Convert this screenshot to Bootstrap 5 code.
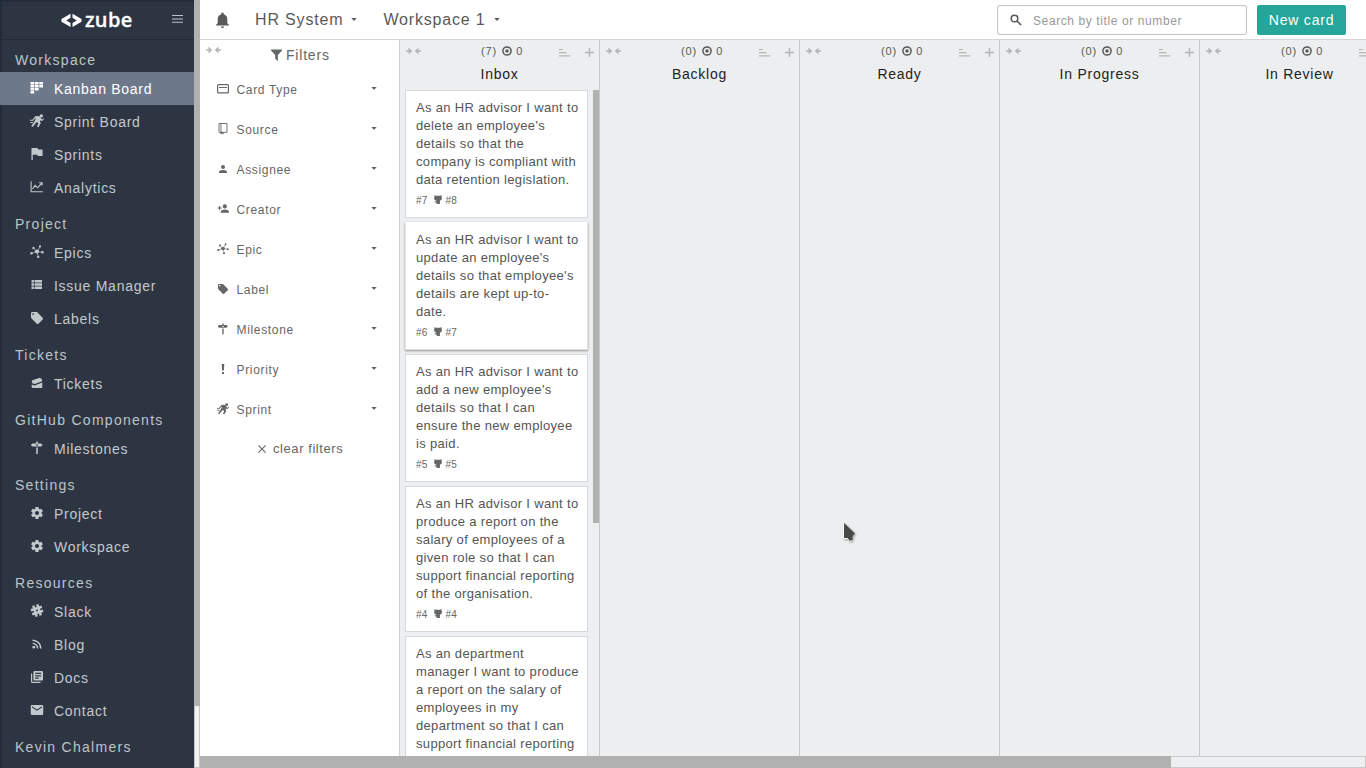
<!DOCTYPE html>
<html lang="en">
<head>
<meta charset="utf-8">
<meta name="viewport" content="width=device-width, initial-scale=1">
<title>Zube - Kanban Board</title>
<link href="https://cdn.jsdelivr.net/npm/bootstrap@5.3.0/dist/css/bootstrap.min.css" rel="stylesheet">
<style>
body{font-family:"Liberation Sans",Arial,sans-serif;font-size:14px;color:#5a5a5a;letter-spacing:.8px;line-height:18px;background:#fff}
svg{display:block;flex:none;fill:currentColor}
.side{width:194px;background:#2d3543;color:#bcc4c8;box-shadow:inset 2px 2px 3px -1px #1d2635}
.side-top{height:40px;border-bottom:1px solid #212a38;padding-left:61px}
.logo-mark{color:#fff;margin-top:2px}
.logo-word{font:600 20px/22px "Open Sans","Noto Sans",sans-serif;letter-spacing:.3px;color:#fff;margin-left:3px;-webkit-text-stroke:.3px #fff}
.side-head{height:32px;padding:11px 0 0 15px;letter-spacing:1.28px}
.side-link{height:33px;padding-left:30px;color:#c2c9cd;text-decoration:none;gap:10px;letter-spacing:.73px}
.side-link svg{margin-top:-1px}
.side-link span{padding-top:1px}
.side-link.active{background:#6e788b;color:#fff}
.side-track{width:6px;background:#f3f3f3;border:1px solid #c4c4c4}
.side-thumb{height:706px;background:#b1b1b1;margin:-1px}
.topbar{height:40px;border-bottom:1px solid #d4d4d4;font-size:16px;letter-spacing:.83px}
.search-box{width:250px;height:30px;border:1px solid #c8c8c8;border-radius:2px;box-shadow:inset 0 0 1px #bbb;padding-left:12px}
.search-box input{border:0;outline:0;background:none;font-size:12px;letter-spacing:.6px;padding:2px 0 0;margin-left:11px;width:180px}
.search-box input::placeholder{color:#999;opacity:1}
.btn-new{background:#26a69a;color:#fff;width:89px;height:30px;font-size:14px;border:0;border-radius:2px;padding:1px 0 0;letter-spacing:.8px}
.pane{width:200px;border-right:1px solid #d0d0d0}
.lane{width:200px;background:#edeef0;border-right:1px solid #c9c9c9}
.pale{color:#b5b5b5}
.filter-title{height:30px;color:#666}
.filter-row{height:40px;font-size:12px;letter-spacing:.66px;padding:0 22px 0 17px;color:#666}
.filter-row>svg{margin-top:-3px}
.filter-row>span{margin-left:7.5px}
.lane-head{height:22px;font-size:11px;padding:0 5px 0 6px}
.lane-title{height:28px;padding-top:3px;color:#222;letter-spacing:.75px}
.lane-num{margin-left:60px}
.lane-dot{margin:0 4.5px 0 5px}
.lane-sort{margin-top:4px}
.lane-plus{margin:3px 0 0 15px}
.story{width:183px;background:#fff;border:1px solid #d5d9dd;padding:8px 7px 8px 10px;margin:0 0 4px 5px;font-size:13px;letter-spacing:.33px;color:#555}
.story.raised{border-color:#fff #e2e2e2 #ddd;box-shadow:0 1px 2px rgba(0,0,0,.38)}
.story-meta{height:20px;padding-top:3px;font-size:10px;letter-spacing:.2px;color:#666}
.story-cat{margin:3px 4px 0 6px}
.lane-thumb{width:6px;height:433px;background:#b1b1b1}
.board-track{height:12px;border:1px solid #c9c9c9;background:#edeef0}
.board-thumb{width:971px;height:12px;margin:-1px;background:#b1b1b1}
.pointer{left:840px;top:519px;filter:drop-shadow(1px 1px 1px #999)}
</style>
</head>
<body class="vh-100 overflow-hidden d-flex">
<svg width="0" height="0" class="position-absolute" aria-hidden="true">
<symbol id="kanban" viewBox="0 0 13 12"><path d="M0 0h3.7v2.4H0zM4.4 0h3.7v2.4H4.4zM8.8 0h3.7v2.4H8.8zM0 3h3.7v2.4H0zM4.4 3h3.7v2.4H4.4zM8.8 3h3.7v2.4H8.8zM0 6h3.7v2.4H0zM4.4 6h3.7v2.4H4.4zM0 9h3.7v2.4H0z"/></symbol>
<symbol id="runner" viewBox="0 0 14 14"><circle cx="11.300" cy="1.900" r="1.700"/><path d="M5.500 2 9.500 2.200l1.800 2.200-1.300 2.400.7 2.500-2.200 4-1.500-.7 1.400-3.300-1.700-1.200L4.900 10.300 2.600 13l-1.400-1L3.500 9l2.500-4.500-1.300.2-1.500 2-1-.8zM11 4.600l1.300.8 1.300-1.200.4.9-1.700 2L10 6.300zM0 5.700h3.300v1.100H0zM.4 7.900h2.600v1.100H.4z"/></symbol>
<symbol id="flag" viewBox="0 0 12 13"><path d="M0 0h6.700l.6 1.600H12v7.200H7L6.400 7.300H1.400V13H0z"/></symbol>
<symbol id="chart" viewBox="0 0 13 12"><path d="M.6.3v10.500h11.700M2 8l2.600-3.600 2.600 2.400 4-4.600M8.600 1.800h3v2.800" fill="none" stroke="currentColor" stroke-width="1.100"/></symbol>
<symbol id="epic" viewBox="0 0 14 14"><g stroke="currentColor" stroke-width=".7"><path d="M7 6.500 3.400 3M7 6.500 9.900 2M7 6.500l5.500.7M7 6.500l1.200 5M7 6.500 1.500 8.300"/></g><circle cx="7" cy="6.500" r="2.100"/><circle cx="3.500" cy="3" r="1.200"/><circle cx="10" cy="1.400" r="1.100"/><circle cx="12.500" cy="7.200" r="1.200"/><circle cx="8.200" cy="11.900" r="1.200"/><circle cx="1.500" cy="8.300" r="1.200"/></symbol>
<symbol id="list" viewBox="0 0 11 10"><path d="M0 0h2.400v2.500H0zM3.100 0h7.400v2.500H3.100zM0 3.200h2.400v2.500H0zM3.100 3.200h7.400v2.500H3.100zM0 6.400h2.400V9H0zM3.100 6.400h7.400V9H3.100z"/></symbol>
<symbol id="tag" viewBox="2 2 20 20"><path d="M5.500 7A1.500 1.500 0 1 1 7 5.500 1.500 1.500 0 0 1 5.500 7m15.910 4.580-9-9C12.050 2.220 11.550 2 11 2H4a2 2 0 0 0-2 2v7c0 .550.220 1.050.590 1.410l9 9c.360.360.860.590 1.410.590s1.050-.230 1.410-.590l7-7c.370-.360.590-.860.590-1.410s-.230-1.060-.590-1.420"/></symbol>
<symbol id="ticket" viewBox="0 0 12 12"><path d="M.8 4.300Q1 3.500 2 3.100L8.200.9q1.200-.3 1.600.7l.8.300q.8.900.4 2.300L4.600 6.700q-1.500.6-2.200-.2L1.200 6.200Q.6 5.200.8 4.300zM.9 7.500l1.700.7q.9.400 2.300-.1L11.300 5.600v4.600q0 .8-.8.800H2q-1.400 0-1.400-1.200z"/></symbol>
<symbol id="sign" viewBox="0 0 12 14"><path fill-rule="evenodd" d="M5.200.5h1.600v1.900H10l1.700 1.500L10 5.600H1.500L.3 4.800V3.200l1.200-.8h3.700zM5 3.600v.8h2v-.8zM5.200 6.400h1.600v6.600H5.200z"/></symbol>
<symbol id="cog" viewBox="2 2 20 20"><path d="M12 15.500A3.500 3.500 0 0 1 8.500 12 3.500 3.500 0 0 1 12 8.500a3.500 3.500 0 0 1 3.500 3.500 3.500 3.500 0 0 1-3.500 3.500m7.430-2.530c.040-.320.070-.640.070-.970s-.030-.660-.070-1l2.110-1.630c.190-.150.240-.420.120-.640l-2-3.460c-.120-.220-.390-.310-.610-.220l-2.490 1c-.520-.390-1.060-.730-1.690-.980l-.370-2.650A.506.506 0 0 0 14 2h-4c-.250 0-.460.180-.5.420l-.370 2.650c-.630.250-1.170.590-1.690.980l-2.490-1c-.220-.090-.490 0-.610.220l-2 3.460c-.130.220-.070.490.120.640L4.570 11c-.040.340-.070.670-.070 1s.030.650.070.970l-2.110 1.660c-.190.150-.250.420-.120.640l2 3.460c.120.220.390.300.610.220l2.490-1.010c.520.400 1.060.740 1.690.990l.370 2.650c.040.240.250.420.5.420h4c.250 0 .460-.180.500-.420l.370-2.650c.630-.260 1.170-.590 1.690-.990l2.490 1.010c.220.080.490 0 .610-.220l2-3.460c.120-.220.070-.490-.120-.640z"/></symbol>
<symbol id="slack" viewBox="0 0 14 14"><g transform="rotate(-18 7 6.500)"><path d="M4.900.8v11.400M9.100.8v11.400M1.300 4.400h11.400M1.300 8.600h11.400" fill="none" stroke="currentColor" stroke-width="2.500"/></g></symbol>
<symbol id="rss" viewBox="0 0 11 11"><circle cx="2" cy="9" r="1.500"/><path d="M.6 1.300A9.100 9.100 0 0 1 9.700 10.400M.6 4.800a5.600 5.600 0 0 1 5.600 5.600" fill="none" stroke="currentColor" stroke-width="1.600"/></symbol>
<symbol id="docs" viewBox="2 2 20 20"><path d="M4 6H2v14a2 2 0 0 0 2 2h14v-2H4zm16-4H8a2 2 0 0 0-2 2v12a2 2 0 0 0 2 2h12a2 2 0 0 0 2-2V4a2 2 0 0 0-2-2m-1 9H9V9h10zm-4 4H9v-2h6zm4-8H9V5h10z"/></symbol>
<symbol id="mail" viewBox="2 4 20 16"><path d="m20 8-8 5-8-5V6l8 5 8-5m0-2H4c-1.110 0-2 .890-2 2v12a2 2 0 0 0 2 2h16a2 2 0 0 0 2-2V6a2 2 0 0 0-2-2"/></symbol>
<symbol id="caret" viewBox="0 0 6 3"><path d="M.3 0h5.400L3 3z"/></symbol>
<symbol id="cardtype" viewBox="0 0 12 10"><path d="M.6 1.500Q.6.600 1.500.600h9q.9 0 .9.900v6.500q0 .9-.9.900h-9q-.9 0-.9-.9zM2 3.500h8" fill="none" stroke="currentColor" stroke-width="1.200"/></symbol>
<symbol id="repo" viewBox="0 0 9 12"><path d="M.5.5h8v8.800h-8zM2.500.5v8.800" fill="none" stroke="currentColor" stroke-width=".9"/><path d="M2 9h3v2.500l-1.500-1L2 11.500z"/></symbol>
<symbol id="person" viewBox="4 4 16 16"><path d="M12 4a4 4 0 1 1 0 8 4 4 0 0 1 0-8m0 10c4.420 0 8 1.790 8 4v2H4v-2c0-2.210 3.580-4 8-4"/></symbol>
<symbol id="personadd" viewBox="0 4 23 16"><path d="M15 14c-2.670 0-8 1.330-8 4v2h16v-2c0-2.670-5.330-4-8-4m-9-4V7H4v3H1v2h3v3h2v-3h3v-2m6 2a4 4 0 1 0 0-8 4 4 0 0 0 0 8"/></symbol>
<symbol id="bang" viewBox="0 0 3 10"><path d="M.2 0h2.600l-.4 6.500H.6zM.5 7.900h2V10h-2z"/></symbol>
<symbol id="inward" viewBox="0 0 15 8"><path d="M0 3.200h2.500V.6L6.200 4 2.500 7.400V4.800H0zM15 3.200h-2.500V.6L8.800 4l3.700 3.400V4.800H15z"/></symbol>
<symbol id="target" viewBox="0 0 10 10"><circle cx="5" cy="5" r="4.100" fill="none" stroke="currentColor" stroke-width="1.500"/><circle cx="5" cy="5" r="1.700"/></symbol>
<symbol id="sort" viewBox="0 0 11 8"><path d="M0 0h4v1H0zM0 3h7.500v1.200H0zM0 6.200h11v1.200H0z"/></symbol>
<symbol id="plus" viewBox="0 0 9 9"><path d="M3.800 0h1.400v3.800H9v1.400H5.200V9H3.800V5.200H0V3.800h3.800z"/></symbol>
<symbol id="cat" viewBox="0 0 8 9"><path d="M.5 0 2 .7h4L7.500 0v1.500L8 2.800 7.500 4.800l-1.600 1V9H2.700V7.600L1.200 7.400.3 6.300l1.200.1.900-.6L.6 4.800 0 2.800l.5-1.300z"/></symbol>
</svg>

<aside class="side d-flex flex-column flex-shrink-0">
  <div class="side-top d-flex align-items-center flex-shrink-0">
    <svg class="logo-mark" width="21" height="15" viewBox="0 0 21 15"><path d="M9.500.8v4L5.300 7.400l4.200 2.700v4L.5 8.800V6zM11.500.8v4l4.200 2.600-4.200 2.700v4l9-5.300V6z"/></svg>
    <span class="logo-word">zube</span>
    <svg style="margin:-2px 11px 0 auto" width="11" height="8" viewBox="0 0 11 8"><path d="M0 0h11v1H0zM0 3.400h11v1H0zM0 6.800h11v1H0z"/></svg>
  </div>
  <nav>
    <div class="side-head">Workspace</div>
    <a class="side-link active d-flex align-items-center"><svg width="14" height="12"><use href="#kanban"/></svg><span>Kanban Board</span></a>
    <a class="side-link d-flex align-items-center"><svg width="14" height="14"><use href="#runner"/></svg><span>Sprint Board</span></a>
    <a class="side-link d-flex align-items-center"><svg width="14" height="12"><use href="#flag"/></svg><span>Sprints</span></a>
    <a class="side-link d-flex align-items-center"><svg width="14" height="12"><use href="#chart"/></svg><span>Analytics</span></a>
    <div class="side-head">Project</div>
    <a class="side-link d-flex align-items-center"><svg width="14" height="14"><use href="#epic"/></svg><span>Epics</span></a>
    <a class="side-link d-flex align-items-center"><svg width="14" height="10"><use href="#list"/></svg><span>Issue Manager</span></a>
    <a class="side-link d-flex align-items-center"><svg width="14" height="12"><use href="#tag"/></svg><span>Labels</span></a>
    <div class="side-head">Tickets</div>
    <a class="side-link d-flex align-items-center"><svg width="14" height="12"><use href="#ticket"/></svg><span>Tickets</span></a>
    <div class="side-head">GitHub Components</div>
    <a class="side-link d-flex align-items-center"><svg width="14" height="14"><use href="#sign"/></svg><span>Milestones</span></a>
    <div class="side-head">Settings</div>
    <a class="side-link d-flex align-items-center"><svg width="14" height="12"><use href="#cog"/></svg><span>Project</span></a>
    <a class="side-link d-flex align-items-center"><svg width="14" height="12"><use href="#cog"/></svg><span>Workspace</span></a>
    <div class="side-head">Resources</div>
    <a class="side-link d-flex align-items-center"><svg width="14" height="14"><use href="#slack"/></svg><span>Slack</span></a>
    <a class="side-link d-flex align-items-center"><svg width="14" height="10"><use href="#rss"/></svg><span>Blog</span></a>
    <a class="side-link d-flex align-items-center"><svg width="14" height="12"><use href="#docs"/></svg><span>Docs</span></a>
    <a class="side-link d-flex align-items-center"><svg width="14" height="10"><use href="#mail"/></svg><span>Contact</span></a>
    <div class="side-head">Kevin Chalmers</div>
  </nav>
</aside>
<div class="side-track flex-shrink-0"><div class="side-thumb"></div></div>

<main class="d-flex flex-column flex-grow-1 overflow-hidden">
  <header class="topbar d-flex align-items-center flex-shrink-0">
    <svg style="margin-left:16px" width="13" height="16" viewBox="4 2 16 20"><path d="M12 22a2 2 0 0 0 2-2h-4a2 2 0 0 0 2 2m6-6v-5c0-3.070-1.640-5.640-4.500-6.320V4a1.500 1.500 0 0 0-3 0v.68C7.630 5.360 6 7.920 6 11v5l-2 2v1h16v-1z"/></svg>
    <span style="margin-left:26px">HR System</span><svg style="margin:-1px 0 0 8px" width="6" height="3"><use href="#caret"/></svg>
    <span style="margin-left:26px">Workspace 1</span><svg style="margin:-1px 0 0 8px" width="6" height="3"><use href="#caret"/></svg>
    <label class="search-box d-flex align-items-center ms-auto"><svg width="12" height="12" viewBox="0 0 12 12"><circle cx="4.500" cy="4.500" r="3.300" fill="none" stroke="currentColor" stroke-width="1.500"/><path d="m7 7 4 4" stroke="currentColor" stroke-width="1.700"/></svg><input placeholder="Search by title or number"></label>
    <button class="btn btn-new" style="margin:0 20px 0 10px">New card</button>
  </header>

  <div class="d-flex flex-grow-1 overflow-hidden">
    <section class="pane flex-shrink-0">
      <div class="filter-title d-flex align-items-center">
        <svg class="pale align-self-start" style="margin:6px 0 0 6px" width="15" height="8"><use href="#inward"/></svg>
        <svg style="margin-left:50px" width="11" height="12" viewBox="0 0 11 12"><path d="M0 .6h11v1L6.900 6v6L4.200 9.800V6L0 1.600z"/></svg><span style="margin-left:4px">Filters</span>
      </div>
      <div class="filter-row d-flex align-items-center"><svg width="12" height="10"><use href="#cardtype"/></svg><span>Card Type</span><svg class="ms-auto" width="6" height="3"><use href="#caret"/></svg></div>
      <div class="filter-row d-flex align-items-center"><svg width="12" height="12"><use href="#repo"/></svg><span>Source</span><svg class="ms-auto" width="6" height="3"><use href="#caret"/></svg></div>
      <div class="filter-row d-flex align-items-center"><svg width="12" height="8"><use href="#person"/></svg><span>Assignee</span><svg class="ms-auto" width="6" height="3"><use href="#caret"/></svg></div>
      <div class="filter-row d-flex align-items-center"><svg width="12" height="9"><use href="#personadd"/></svg><span>Creator</span><svg class="ms-auto" width="6" height="3"><use href="#caret"/></svg></div>
      <div class="filter-row d-flex align-items-center"><svg width="12" height="12"><use href="#epic"/></svg><span>Epic</span><svg class="ms-auto" width="6" height="3"><use href="#caret"/></svg></div>
      <div class="filter-row d-flex align-items-center"><svg width="12" height="10"><use href="#tag"/></svg><span>Label</span><svg class="ms-auto" width="6" height="3"><use href="#caret"/></svg></div>
      <div class="filter-row d-flex align-items-center"><svg width="12" height="12"><use href="#sign"/></svg><span>Milestone</span><svg class="ms-auto" width="6" height="3"><use href="#caret"/></svg></div>
      <div class="filter-row d-flex align-items-center"><svg width="12" height="10"><use href="#bang"/></svg><span>Priority</span><svg class="ms-auto" width="6" height="3"><use href="#caret"/></svg></div>
      <div class="filter-row d-flex align-items-center"><svg width="12" height="12"><use href="#runner"/></svg><span>Sprint</span><svg class="ms-auto" width="6" height="3"><use href="#caret"/></svg></div>
      <div class="d-flex align-items-center" style="height:38px;padding-left:58px;font-size:13px;letter-spacing:.57px;color:#666"><svg width="8" height="8" viewBox="0 0 8 8"><path d="m.4.400 7.200 7.200m0-7.200L.4 7.600" stroke="currentColor" stroke-width="1.100"/></svg><span style="margin-left:7px">clear filters</span></div>
    </section>

    <section class="lane flex-shrink-0">
      <div class="lane-head d-flex align-items-center"><svg class="pale" width="15" height="8"><use href="#inward"/></svg><span class="lane-num">(7)</span><svg class="lane-dot" width="10" height="10"><use href="#target"/></svg><span>0</span><svg class="pale ms-auto lane-sort" width="11" height="8"><use href="#sort"/></svg><svg class="pale lane-plus" width="9" height="9"><use href="#plus"/></svg></div>
      <div class="lane-title text-center">Inbox</div>
      <div class="d-flex justify-content-between">
        <div>
          <article class="story">As an HR advisor I want to delete an employee's details so that the company is compliant with data retention legislation.<div class="story-meta d-flex">#7<svg class="story-cat" width="8" height="9"><use href="#cat"/></svg>#8</div></article>
          <article class="story raised">As an HR advisor I want to update an employee's details so that employee's details are kept up-to-<br>date.<div class="story-meta d-flex">#6<svg class="story-cat" width="8" height="9"><use href="#cat"/></svg>#7</div></article>
          <article class="story">As an HR advisor I want to add a new employee's details so that I can<br>ensure the new employee is paid.<div class="story-meta d-flex">#5<svg class="story-cat" width="8" height="9"><use href="#cat"/></svg>#5</div></article>
          <article class="story">As an HR advisor I want to produce a report on the salary of employees of a given role so that I can support financial reporting of the organisation.<div class="story-meta d-flex">#4<svg class="story-cat" width="8" height="9"><use href="#cat"/></svg>#4</div></article>
          <article class="story">As an department manager I want to produce a report on the salary of employees in my department so that I can support financial reporting</article>
        </div>
        <div class="lane-thumb"></div>
      </div>
    </section>
    <section class="lane flex-shrink-0">
      <div class="lane-head d-flex align-items-center"><svg class="pale" width="15" height="8"><use href="#inward"/></svg><span class="lane-num">(0)</span><svg class="lane-dot" width="10" height="10"><use href="#target"/></svg><span>0</span><svg class="pale ms-auto lane-sort" width="11" height="8"><use href="#sort"/></svg><svg class="pale lane-plus" width="9" height="9"><use href="#plus"/></svg></div>
      <div class="lane-title text-center">Backlog</div>
    </section>
    <section class="lane flex-shrink-0">
      <div class="lane-head d-flex align-items-center"><svg class="pale" width="15" height="8"><use href="#inward"/></svg><span class="lane-num">(0)</span><svg class="lane-dot" width="10" height="10"><use href="#target"/></svg><span>0</span><svg class="pale ms-auto lane-sort" width="11" height="8"><use href="#sort"/></svg><svg class="pale lane-plus" width="9" height="9"><use href="#plus"/></svg></div>
      <div class="lane-title text-center">Ready</div>
    </section>
    <section class="lane flex-shrink-0">
      <div class="lane-head d-flex align-items-center"><svg class="pale" width="15" height="8"><use href="#inward"/></svg><span class="lane-num">(0)</span><svg class="lane-dot" width="10" height="10"><use href="#target"/></svg><span>0</span><svg class="pale ms-auto lane-sort" width="11" height="8"><use href="#sort"/></svg><svg class="pale lane-plus" width="9" height="9"><use href="#plus"/></svg></div>
      <div class="lane-title text-center">In Progress</div>
    </section>
    <section class="lane flex-shrink-0">
      <div class="lane-head d-flex align-items-center"><svg class="pale" width="15" height="8"><use href="#inward"/></svg><span class="lane-num">(0)</span><svg class="lane-dot" width="10" height="10"><use href="#target"/></svg><span>0</span><svg class="pale ms-auto lane-sort" width="11" height="8"><use href="#sort"/></svg><svg class="pale lane-plus" width="9" height="9"><use href="#plus"/></svg></div>
      <div class="lane-title text-center">In Review</div>
    </section>
  </div>
  <div class="board-track flex-shrink-0"><div class="board-thumb"></div></div>
</main>
<svg class="pointer position-absolute" width="18" height="24" viewBox="0 0 18 24"><path d="M3.500 3.500v16h4l2 3 3-1.500v-4l2.500-2.500z" fill="#484848"/><path d="M3.500 3.500v16h4l2 3 2-1" fill="none" stroke="#fff"/></svg>
<script src="https://cdn.jsdelivr.net/npm/bootstrap@5.3.0/dist/js/bootstrap.bundle.min.js"></script>
</body>
</html>
